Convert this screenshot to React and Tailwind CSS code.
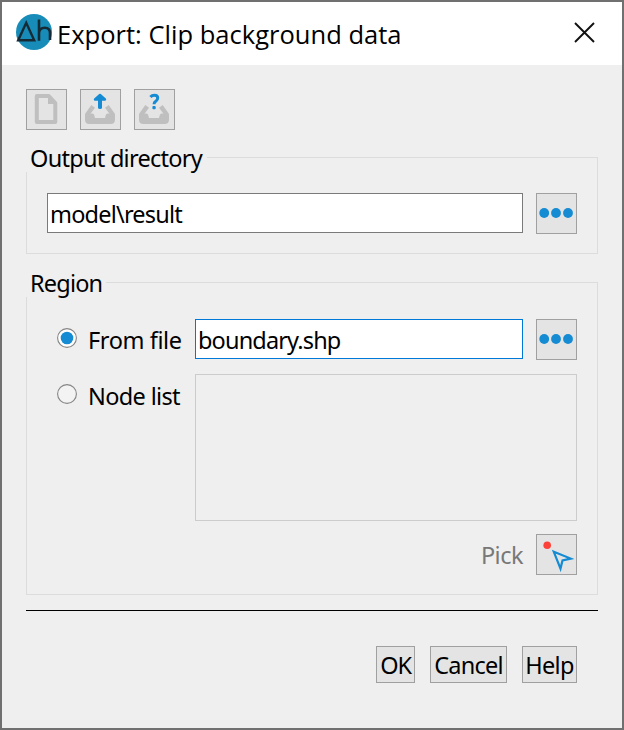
const PageIcon = () => (
  <svg width="39" height="39" viewBox="0 0 39 39" fill="none">
    <path d="M9.8 6h12L28.3 13V32H9.8z" stroke="#bfbfbf" strokeWidth="4" strokeLinejoin="round" />
    <path d="M21 5l9 9h-9z" fill="#bfbfbf" />
  </svg>
)

const Tray = () => (
  <g fill="#bfbfbf">
    <path d="M10.3 15L14 17.8L8.2 25.5L4 24Z" />
    <path d="M27.7 15L24 17.8L29.8 25.5L34 24Z" />
    <path d="M4 24.5Q4.2 23.5 5.5 23.5H11.5Q12.8 23.5 13.2 25L14 28H24L24.8 25Q25.2 23.5 26.5 23.5H32.5Q33.8 23.5 34 24.5V29.5Q34 34 29.5 34H8.5Q4 34 4 29.5Z" />
  </g>
)

const ExportIcon = () => (
  <svg width="39" height="39" viewBox="0 0 39 39" fill="none">
    <Tray />
    <path d="M17 9H21V17.5Q21 19 19 19T17 17.5Z" fill="#148bd2" />
    <path d="M19 5L24 9.5H14Z" fill="#148bd2" stroke="#148bd2" strokeWidth="2.4" strokeLinejoin="round" />
  </svg>
)

const QueryIcon = () => (
  <svg width="39" height="39" viewBox="0 0 39 39" fill="none">
    <Tray />
    <path d="M15.4 7Q17 5.3 19.4 5.3Q22.7 5.3 22.7 8.1Q22.7 9.8 21 11Q19 12.2 19 14.3" stroke="#148bd2" strokeWidth="3" />
    <rect x="17.4" y="16" width="3.3" height="3.3" rx="1" fill="#148bd2" />
  </svg>
)

const DotsIcon = () => (
  <svg width="39" height="39" viewBox="0 0 39 39" fill="#148bd2">
    <circle cx="7.2" cy="19" r="4.9" />
    <circle cx="19" cy="19" r="4.9" />
    <circle cx="31" cy="19" r="4.9" />
  </svg>
)

const PickIcon = () => (
  <svg width="39" height="39" viewBox="0 0 39 39" fill="none">
    <circle cx="10.2" cy="10.3" r="3.8" fill="#fc4138" />
    <path d="M16.8 16.8L33.8 23.6L25.5 25.5L23.5 33.6Z" stroke="#148bd2" strokeWidth="2.2" />
  </svg>
)

const Logo = () => (
  <svg className="mt-3 ml-3.5" width="36" height="36" viewBox="0 0 36 36" fill="none">
    <circle cx="18" cy="18" r="18" fill="#178cb8" />
    <path d="M2.2 26.2L10.2 8.8L18.2 26.2Z" stroke="#152a35" strokeWidth="2.4" />
    <path d="M23 5.5V26.8M23 19Q23.5 13.7 28.8 13.7Q34 13.7 34 19V26" stroke="#152a35" strokeWidth="2.6" />
  </svg>
)

const IconButton = ({ icon: Icon, label }) => (
  <button aria-label={label} className="h-[41px] w-[41px] flex-shrink-0 border border-[#a0a0a0] bg-[#e4e4e4]">
    <Icon />
  </button>
)

const Group = ({ title, className, titleClass, children }) => (
  <fieldset className={`min-w-0 border border-[#dcdcdc] ${className}`}>
    <legend className={`-ml-px h-[29px] whitespace-nowrap bg-[#efefef] pl-1 leading-[31px] ${titleClass}`}>{title}</legend>
    {children}
  </fieldset>
)

const Radio = ({ checked }) => (
  <svg className="flex-shrink-0" width="20" height="20" viewBox="0 0 20 20">
    <circle cx="10" cy="10" r="9.4" fill={checked ? '#fff' : '#f3f3f3'} stroke="#858585" strokeWidth="1.1" />
    {checked && <circle cx="10" cy="10" r="6.3" fill="#148bd2" />}
  </svg>
)

const actions = [
  { name: 'OK', box: 'w-[39px] tracking-[-1.2px]' },
  { name: 'Cancel', box: 'w-[77px] tracking-[-0.8px]' },
  { name: 'Help', box: 'w-[55px] tracking-[-0.7px]' }
]

export default function App() {
  return (
    <div className="h-[730px] w-[624px] border-2 border-[#707070] bg-[#efefef] font-['Noto_Sans',sans-serif] text-[23.5px] tracking-[-0.5px] text-black">
      <header className="flex h-[63px] bg-white">
        <Logo />
        <h1 className="ml-[5px] mt-3.5 flex-1 whitespace-nowrap font-['Open_Sans',sans-serif] text-[25.5px] leading-[36px] tracking-[0.02px]">
          Export: Clip background data
        </h1>
        <svg className="mr-[27px] mt-5" width="21" height="21" viewBox="0 0 21 21" fill="none">
          <path d="M1 1L20 20M20 1L1 20" stroke="#111" strokeWidth="1.9" />
        </svg>
      </header>

      <main className="px-6 pt-6">
        <div className="flex gap-[13px]">
          <IconButton icon={PageIcon} label="New" />
          <IconButton icon={ExportIcon} label="Export" />
          <IconButton icon={QueryIcon} label="Query" />
        </div>

        <Group title="Output directory" className="mt-[13px] h-[111px]" titleClass="w-[181px] tracking-[-0.72px]">
          <div className="flex gap-[13px] pl-5 pt-[21px]">
            <div className="h-10 w-[476px] border border-[#7a7a7a] bg-white pl-0.5 leading-[41px] tracking-[-0.8px]">model\result</div>
            <IconButton icon={DotsIcon} label="Browse directory" />
          </div>
        </Group>

        <Group title="Region" className="mt-3.5 h-[327px]" titleClass="w-[80px] tracking-[-0.8px]">
          <div className="flex h-[63px] pl-[30px] pt-[22px]">
            <div className="flex w-[138px] gap-[11px]">
              <div className="mt-[9px]"><Radio checked /></div>
              <span className="whitespace-nowrap leading-[43px] tracking-[-0.4px]">From file</span>
            </div>
            <div className="mr-[13px] h-10 w-[328px] border border-[#0078d7] bg-white pl-0.5 leading-[41px] tracking-[-0.85px]">boundary.shp</div>
            <IconButton icon={DotsIcon} label="Browse file" />
          </div>
          <div className="mt-3.5 flex h-[147px] pl-[30px]">
            <div className="flex w-[138px] gap-[11px]">
              <div className="mt-2.5"><Radio /></div>
              <span className="whitespace-nowrap leading-[45px] tracking-[-0.65px]">Node list</span>
            </div>
            <div className="w-[382px] border border-[#cccccc]" />
          </div>
          <div className="mt-[13px] flex justify-end gap-[13px] pr-5 text-[#787878]">
            <span className="leading-[42px]">Pick</span>
            <IconButton icon={PickIcon} label="Pick" />
          </div>
        </Group>

        <div className="mt-[15px] h-px bg-black" />

        <div className="mt-[35px] flex justify-end gap-[15px] pr-[21px]">
          {actions.map((action) => (
            <button
              key={action.name}
              className={`flex h-[37px] items-center justify-center whitespace-nowrap border border-[#a0a0a0] bg-[#e4e4e4] pt-0.5 ${action.box}`}
            >
              {action.name}
            </button>
          ))}
        </div>
      </main>
    </div>
  )
}
